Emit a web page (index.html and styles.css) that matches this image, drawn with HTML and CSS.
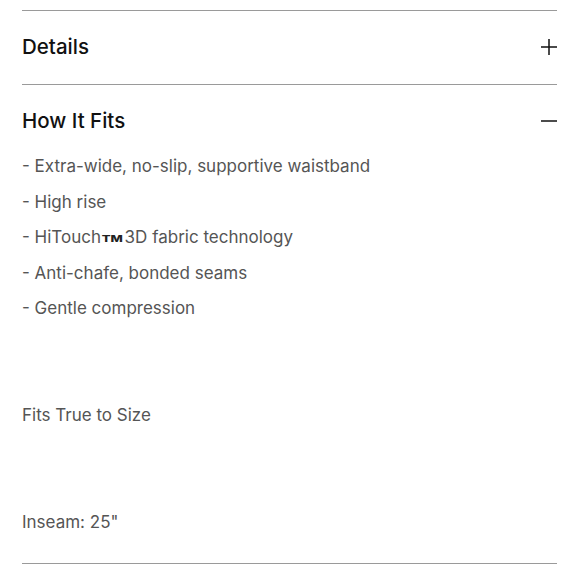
FILE: index.html
```html
<!DOCTYPE html>
<html lang="en">
<head>
<meta charset="utf-8">
<title>Product details</title>
<link rel="stylesheet" href="styles.css">
</head>
<body>
<div class="accordion">
  <section class="acc">
    <div class="acc-head">
      <h2 class="acc-title">Details</h2>
      <svg class="acc-icon" viewBox="0 0 18 18" width="18" height="18" aria-hidden="true">
        <path d="M9 1V17M1 9H17" stroke="#111" stroke-width="1.5" fill="none"/>
      </svg>
    </div>
  </section>
  <section class="acc acc--open">
    <div class="acc-head">
      <h2 class="acc-title">How It Fits</h2>
      <svg class="acc-icon" viewBox="0 0 18 18" width="18" height="18" aria-hidden="true">
        <path d="M1 9H17" stroke="#111" stroke-width="1.5" fill="none"/>
      </svg>
    </div>
    <div class="acc-body">
      <ul class="fit-list">
        <li>- Extra-wide, no-slip, supportive waistband</li>
        <li>- High rise</li>
        <li>- HiTouch<span class="tm">TM</span>3D fabric technology</li>
        <li>- Anti-chafe, bonded seams</li>
        <li>- Gentle compression</li>
      </ul>
      <p class="fit-note">Fits True to Size</p>
      <p class="fit-note">Inseam: 25"</p>
    </div>
  </section>
</div>
</body>
</html>
```

FILE: styles.css
```css
* { box-sizing: border-box; }

html, body {
  margin: 0;
  padding: 0;
  background: #fff;
}

body {
  font-family: Inter, "Noto Sans", "Liberation Sans", sans-serif;
  color: #111;
}

.accordion {
  padding: 10px 23px 0 22px;
}

.acc {
  border-top: 1px solid #9a9a9a;
}

.acc:last-child {
  border-bottom: 1px solid #9a9a9a;
}

.acc-head {
  display: flex;
  align-items: center;
  justify-content: space-between;
  padding: 24px 0 25px;
}

.acc--open .acc-head {
  padding-bottom: 16px;
}

.acc-title {
  margin: 0;
  font-size: 20.5px;
  line-height: 24px;
  font-weight: 500;
  color: #111;
  letter-spacing: 0;
}

.acc-icon {
  display: block;
  flex: none;
  margin-right: -1px;
}

.acc-body {
  padding-bottom: 22px;
  color: #555;
  font-size: 17px;
  line-height: 35.6px;
}

.fit-list {
  list-style: none;
  margin: 0;
  padding: 0;
}

.tm {
  display: inline-block;
  font-size: 9px;
  line-height: 1;
  font-weight: 800;
  color: #222;
  transform: scaleX(1.45);
  margin: 0 5px 0 4px;
  vertical-align: 1.5px;
}

.fit-note {
  margin: 71.2px 0 0;
}
```
